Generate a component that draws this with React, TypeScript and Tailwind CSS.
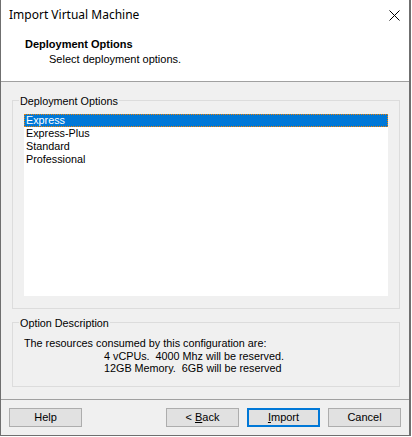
import React from "react";

const sans = { fontFamily: '"Liberation Sans", Arial, sans-serif' };

function Btn({ children, primary }: { children: React.ReactNode; primary?: boolean }) {
  return (
    <div
      className={
        "w-[73px] h-[19px] flex items-center justify-center text-[11px] text-black bg-[#e1e1e1] " +
        (primary ? "border-2 border-[#0078d7]" : "border border-[#adadad]")
      }
    >
      {children}
    </div>
  );
}

export default function App() {
  return (
    <div className="w-[412px] h-[437px] bg-white" style={sans}>
      <div className="w-[411px] h-[436px] border-l border-r-2 border-b border-[#6f6f6f] flex flex-col bg-[#f0f0f0]">
        {/* Title bar */}
        <div className="h-[30px] bg-white flex items-center justify-between pl-[8px] pr-[9px] shrink-0">
          <span className="text-[12px] text-black" style={{ fontFamily: '"Noto Sans", "Open Sans", sans-serif' }}>
            Import Virtual Machine
          </span>
          <svg width="11" height="11" viewBox="0 0 11 11">
            <path d="M0.5 0.5 L10.5 10.5 M10.5 0.5 L0.5 10.5" stroke="#000" strokeWidth="1" />
          </svg>
        </div>
        {/* Header */}
        <div className="h-[52px] bg-white border-b border-[#a0a0a0] shrink-0 pl-[24px] pt-[7px]">
          <div className="text-[11px] font-bold leading-[14px] text-black">Deployment Options</div>
          <div className="text-[11px] leading-[14px] text-black pl-[24px] mt-[1px]">Select deployment options.</div>
        </div>
        {/* Body */}
        <div className="flex-1 flex flex-col px-[11px] pt-[18px]">
          {/* Group 1 */}
          <div className="relative h-[209px] border border-[#dcdcdc] w-[388px]">
            <span className="absolute left-[6px] top-[-7px] bg-[#f0f0f0] px-[1px] text-[10.8px] leading-[14px] text-black">
              Deployment Options
            </span>
            <div className="absolute left-[11px] top-[13px] w-[364px] h-[182px] bg-white text-[10.8px] leading-[13px] text-black">
              <div className="h-[13px] bg-[#0078d7] text-white pl-[2px] outline outline-1 outline-dotted outline-[#f08000] -outline-offset-1">
                Express
              </div>
              <div className="h-[13px] pl-[2px]">Express-Plus</div>
              <div className="h-[13px] pl-[2px]">Standard</div>
              <div className="h-[13px] pl-[2px]">Professional</div>
            </div>
          </div>
          {/* Group 2 */}
          <div className="relative mt-[13px] h-[65px] border border-[#dcdcdc] w-[388px]">
            <span className="absolute left-[6px] top-[-7px] bg-[#f0f0f0] px-[1px] text-[10.8px] leading-[14px] text-black">
              Option Description
            </span>
            <div className="pl-[11px] pt-[14px] text-[10.8px] leading-[12.5px] text-black whitespace-pre">
              <div>The resources consumed by this configuration are:</div>
              <div className="pl-[80px]">4 vCPUs.  4000 Mhz will be reserved.</div>
              <div className="pl-[80px]">12GB Memory.  6GB will be reserved</div>
            </div>
          </div>
        </div>
        {/* Footer */}
        <div className="h-[36px] border-t border-[#a0a0a0] shrink-0 flex items-start pt-[8px] pl-[8px] pr-[8px]">
          <Btn>Help</Btn>
          <div className="flex-1" />
          <div className="flex gap-[8px]">
            <Btn>
              &lt; <span className="underline ml-[3px]">B</span>ack
            </Btn>
            <Btn primary>
              <span className="underline">I</span>mport
            </Btn>
            <Btn>Cancel</Btn>
          </div>
        </div>
      </div>
    </div>
  );
}
